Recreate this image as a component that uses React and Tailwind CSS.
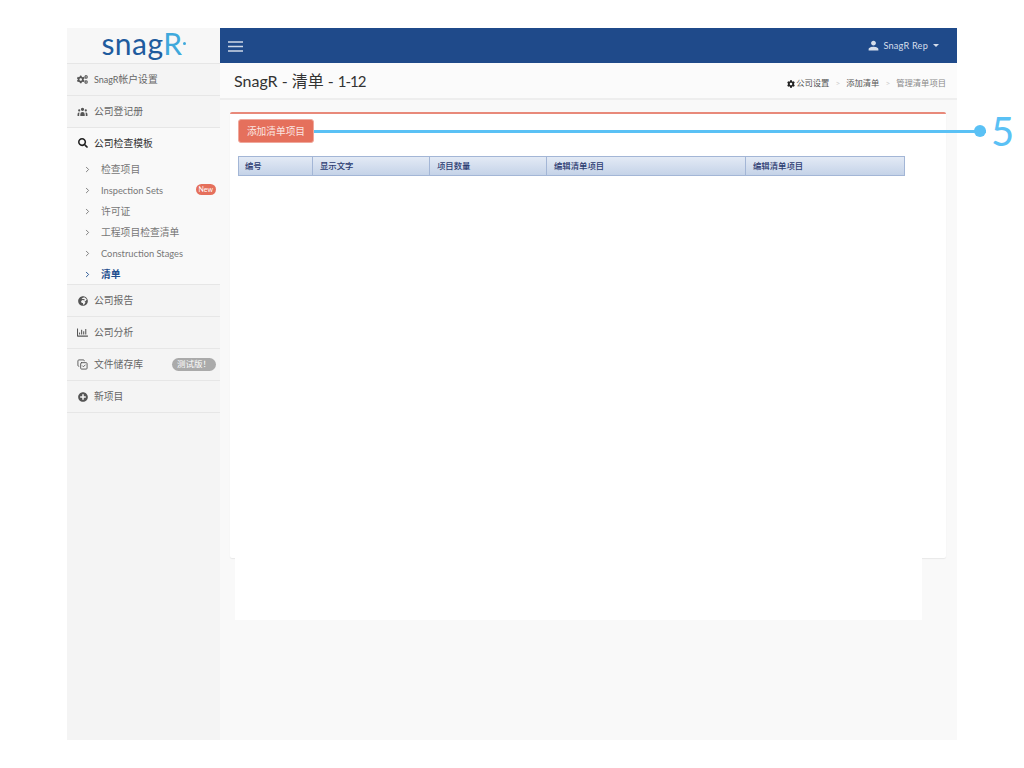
import React from "react";
import { ChevronRight } from "lucide-react";
import { FaCogs, FaSearch, FaGlobeAfrica, FaRegChartBar, FaPlusCircle, FaCog } from "react-icons/fa";
import { HiUserGroup } from "react-icons/hi";
import { IoMdPerson } from "react-icons/io";
import { LuCopyCheck } from "react-icons/lu";

const subItems = [
  { label: "检查项目" },
  { label: "Inspection Sets", badge: true, latin: true },
  { label: "许可证" },
  { label: "工程项目检查清单" },
  { label: "Construction Stages", latin: true },
  { label: "清单", active: true },
];

const columns = [
  { label: "编号", width: "w-[74px]", pad: "pl-[6px]" },
  { label: "显示文字", width: "w-[117px]", pad: "pl-[7px]" },
  { label: "项目数量", width: "w-[117px]", pad: "pl-[7px]" },
  { label: "编辑清单项目", width: "w-[199px]", pad: "pl-[7px]" },
  { label: "编辑清单项目", width: "flex-1", pad: "pl-[7px]" },
];

const NavRow = ({ icon, label, children }) => (
  <div className="h-8 flex items-center border-b border-[#e6e6e6] pl-[10px] pr-1 gap-[6px]">
    <span className="w-[11px] flex justify-center text-[#555555]">{icon}</span>
    <span className="text-[9.8px] text-[#666666]">{label}</span>
    {children}
  </div>
);

export default function App() {
  return (
    <div className="bg-white h-[768px] pt-[28px] pl-[67px] font-['Lato','Noto_Sans_CJK_SC',sans-serif]">
      <div className="relative w-[890px] h-[712px] flex bg-[#f9f9f9]">
        <aside className="w-[153px] bg-[#f4f4f4] shrink-0">
          <div className="h-[36px] flex items-center justify-center border-b border-[#e6e6e6] bg-[#f7f7f7]">
            <span className="text-[30px] leading-none tracking-[0.5px] text-[#1f5c9e] -mt-[6px]">
              snag<span className="text-[#3fa9dc]">R</span>
            </span>
            <span className="w-[3px] h-[3px] rounded-full bg-[#3fa9dc] -mt-[4px]" />
          </div>
          <NavRow
            icon={<FaCogs size={11} />}
            label={
              <>
                <span className="text-[9px]">SnagR</span>帐户设置
              </>
            }
          />
          <NavRow icon={<HiUserGroup size={13} />} label="公司登记册" />
          <div className="bg-[#f9f9f9] border-b border-[#e6e6e6]">
            <div className="h-[31px] pb-[1px] flex items-center pl-[10px] gap-[6px]">
              <span className="w-[11px] flex justify-center text-[#222222]">
                <FaSearch size={10} />
              </span>
              <span className="text-[9.8px] text-[#333333]">公司检查模板</span>
            </div>
            <div className="h-[125px]">
              {subItems.map((item) => (
                <div key={item.label} className="h-[21px] flex items-center pl-[16px] pr-1">
                  <ChevronRight
                    size={9}
                    strokeWidth={2.5}
                    className={item.active ? "text-[#1f4f8f]" : "text-[#777777]"}
                  />
                  <span
                    className={`ml-[9px] ${item.latin ? "text-[9.3px]" : "text-[9.8px]"} ${
                      item.active ? "text-[#1f4f8f] font-bold" : "text-[#777777]"
                    }`}
                  >
                    {item.label}
                  </span>
                  {item.badge && (
                    <span className="ml-auto -mt-[3px] bg-[#e5705c] text-white text-[7px] leading-none px-[3px] py-[2px] rounded-full">
                      New
                    </span>
                  )}
                </div>
              ))}
            </div>
          </div>
          <NavRow icon={<FaGlobeAfrica size={10} />} label="公司报告" />
          <NavRow icon={<FaRegChartBar size={11} />} label="公司分析" />
          <NavRow icon={<LuCopyCheck size={11} />} label="文件储存库">
            <span className="ml-auto bg-[#aaaaaa] text-white text-[8.5px] leading-none px-[5px] py-[2px] rounded-full">
              测试版！
            </span>
          </NavRow>
          <NavRow icon={<FaPlusCircle size={10} />} label="新项目" />
        </aside>

        <main className="flex-1 min-w-0">
          <header className="h-[35px] bg-[#1f4a8a] flex items-center justify-between pl-[8px] pr-[18px]">
            <svg width="15" height="11" viewBox="0 0 15 11" className="mt-[1px]">
              <path d="M0 1h15M0 5.5h15M0 10h15" stroke="#cfd9e8" strokeWidth="1.3" fill="none" />
            </svg>
            <div className="flex items-center text-[#d5deeb] text-[9.2px] mt-[1px]">
              <IoMdPerson size={13} />
              <span className="ml-[3px] tracking-[0.2px]">SnagR Rep</span>
              <span className="ml-[5px] border-x-[3px] border-x-transparent border-t-[3px] border-t-[#d5deeb]" />
            </div>
          </header>

          <div className="h-[37px] bg-[#fbfbfb] border-b-2 border-[#eeeeee] flex items-center justify-between pl-[14px] pr-[11px]">
            <h1 className="text-[16px] text-[#333333] mt-[1px]">
              SnagR - 清单 - <span className="text-[15px] tracking-[-1px]">1-12</span>
            </h1>
            <div className="flex items-center gap-[6px] text-[8.3px] text-[#555555] mt-[6px]">
              <span className="flex items-center gap-[1px]">
                <FaCog size={8} className="text-[#222222]" />
                公司设置
              </span>
              <span className="text-[#cccccc]">&gt;</span>
              <span>添加清单</span>
              <span className="text-[#cccccc]">&gt;</span>
              <span className="text-[#888888]">管理清单项目</span>
            </div>
          </div>

          <div className="pt-[12px] pl-[10px] pr-[11px]">
            <section className="h-[446px] bg-white border-t-2 border-[#e8897a] rounded-[2px] shadow-[0_1px_1px_#e8e8e8] pt-[5px] px-[8px]">
              <button className="block w-[76px] h-[24px] bg-[#e5705c] border border-[#f0a89c] rounded-[3px] text-[#fbe6e2] text-[9.7px]">
                添加清单项目
              </button>
              <div className="mt-[13px] w-[667px] h-[20px] flex border border-[#a3b6d6] bg-gradient-to-b from-[#e3eaf5] to-[#c5d3e8]">
                {columns.map((col, i) => (
                  <div
                    key={i}
                    className={`${col.width} ${col.pad} flex items-center text-[8.4px] font-medium text-[#2a3a70] ${
                      i < 4 ? "border-r border-[#a3b6d6]" : ""
                    }`}
                  >
                    {col.label}
                  </div>
                ))}
              </div>
            </section>
            <div className="ml-[5px] w-[687px] h-[62px] bg-white" />
          </div>
        </main>

        {/* callout, sits on top of the page */}
        <div className="absolute left-[247px] top-[102px] w-[672px] h-[3px] bg-[#5ac1f5]" />
        <div className="absolute left-[907px] top-[97px] w-[12px] h-[12px] rounded-full bg-[#5ac1f5]" />
        <span className="absolute left-[924px] top-[78px] text-[40px] leading-[50px] text-[#5ac1f5]">
          5
        </span>
      </div>
    </div>
  );
}
